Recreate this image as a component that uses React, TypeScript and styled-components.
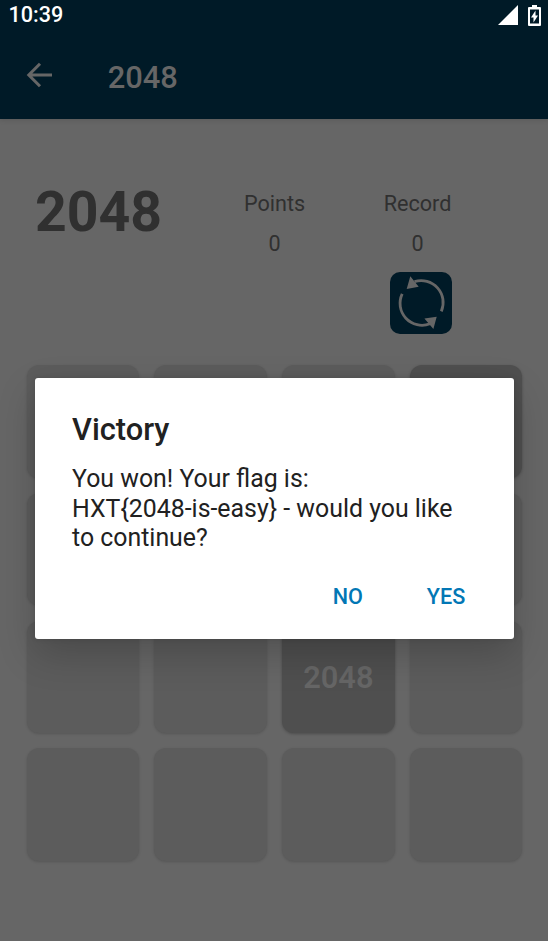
import React from "react";
import styled, { createGlobalStyle } from "styled-components";

const GlobalStyle = createGlobalStyle`
  *, *::before, *::after { box-sizing: border-box; }
  body { margin: 0; background: #666666; }
`;

const Screen = styled.div`
  position: relative;
  width: 548px;
  height: 941px;
  overflow: hidden;
  background: #666666;
  font-family: Roboto, sans-serif;
  color: #303030;
`;

const Header = styled.header`
  height: 119px;
  background: #001a27;
  box-shadow: 0 1px 5px rgba(0, 0, 0, 0.14);
`;

const StatusBar = styled.div`
  display: flex;
  align-items: center;
  justify-content: space-between;
  height: 34px;
  padding: 0 7px 5px 8.5px;
  color: #ffffff;
  font-size: 21.6px;
  font-weight: 500;
  line-height: 29px;
`;

const StatusIcons = styled.div`
  display: flex;
  align-items: center;
  gap: 10px;
  height: 27px;
`;

const Toolbar = styled.div`
  display: flex;
  align-items: center;
  height: 85px;
  padding-left: 26px;
`;

const BackIcon = styled.svg`
  display: block;
  margin: 0 55.7px 3px 0;
`;

const ToolbarTitle = styled.h1`
  margin: 2px 0 0;
  color: #666666;
  font-size: 30.9px;
  font-weight: 500;
  line-height: 36px;
`;

const Summary = styled.section`
  display: flex;
  height: 246px;
  padding: 62px 0 0 35px;
`;

const GameName = styled.div`
  width: 168px;
  font-size: 55.4px;
  font-weight: 700;
  line-height: 64px;
`;

const Score = styled.div`
  display: flex;
  flex-direction: column;
  align-items: center;
  width: 143px;
  padding-top: 10px;
  font-size: 21.6px;
  line-height: 25px;
`;

const ScoreValue = styled.div`
  margin-top: 15px;
`;

const RestartButton = styled.button`
  display: block;
  width: 62px;
  height: 62px;
  margin: 16px 0 0 7.6px;
  padding: 0;
  border: 0;
  border-radius: 10px;
  background: #001a27;
`;

const Board = styled.main`
  display: grid;
  grid-template-columns: repeat(4, 112.6px);
  grid-auto-rows: 112.6px;
  gap: 15.2px;
  padding-left: 26.5px;
`;

const Tile = styled.div<{ $filled: boolean }>`
  display: flex;
  align-items: center;
  justify-content: center;
  padding-top: 1px;
  border-radius: 12px;
  background: ${({ $filled }) => ($filled ? "#4f4f4f" : "#5c5c5c")};
  box-shadow: 0 1px 3px rgba(0, 0, 0, ${({ $filled }) => ($filled ? 0.26 : 0.16)});
  color: #666666;
  font-size: 30.8px;
  font-weight: 600;
`;

const Dialog = styled.div`
  position: absolute;
  top: 378px;
  left: 35px;
  width: 479px;
  height: 261px;
  padding: 33px 37px 0;
  border-radius: 3px;
  background: #ffffff;
  box-shadow: 0 15px 38px rgba(0, 0, 0, 0.2), 0 0 5px rgba(0, 0, 0, 0.12);
  color: #212121;
`;

const DialogTitle = styled.h2`
  margin: 0;
  font-size: 30.8px;
  font-weight: 500;
  line-height: 38px;
`;

const DialogMessage = styled.p`
  margin: 15px 0 0;
  font-size: 24.88px;
  line-height: 29.5px;
`;

const DialogActions = styled.div`
  display: flex;
  justify-content: flex-end;
  gap: 64px;
  margin: 31.4px 11.7px 0 0;
`;

const DialogButton = styled.button`
  padding: 0;
  border: 0;
  background: none;
  color: #0277b5;
  font-family: inherit;
  font-size: 21.6px;
  font-weight: 500;
  line-height: 25px;
`;

const tiles = [0, 0, 0, 2048, 0, 0, 0, 0, 0, 0, 2048, 0, 0, 0, 0, 0];

export default function App() {
  return (
    <Screen>
      <GlobalStyle />
      <Header>
        <StatusBar>
          <span>10:39</span>
          <StatusIcons>
            <svg width="20" height="20" viewBox="0 0 20 20">
              <path d="M20 0v20H0z" fill="#fff" />
            </svg>
            <svg width="13" height="22" viewBox="0 0 13 22">
              <path
                fillRule="evenodd"
                fill="#fff"
                d="M4 1h5v2h3q1 0 1 1v17q0 1-1 1H1q-1 0-1-1V4q0-1 1-1h3zM2 5.5v14h9v-14z"
              />
              <path d="M7.5 6.5v5H10L5.5 18.5v-5H3z" fill="#fff" />
            </svg>
          </StatusIcons>
        </StatusBar>
        <Toolbar>
          <BackIcon width="26" height="26" viewBox="0 0 26 26">
            <path d="M26 13H3M14 1.8 2.8 13 14 24.2" fill="none" stroke="#666" strokeWidth="3" />
          </BackIcon>
          <ToolbarTitle>2048</ToolbarTitle>
        </Toolbar>
      </Header>
      <Summary>
        <GameName>2048</GameName>
        <Score>
          <div>Points</div>
          <ScoreValue>0</ScoreValue>
        </Score>
        <Score>
          <div>Record</div>
          <ScoreValue>0</ScoreValue>
          <RestartButton aria-label="Restart">
            <svg width="62" height="62" viewBox="0 0 62 62">
              <g fill="none" stroke="#666" strokeWidth="2.8">
                <path d="M24.5 9.6A22 22 0 0 1 51.3 39.4" />
                <path d="M12.2 21.8A22 22 0 0 0 40 51.8" />
              </g>
              <path d="M20.3 4.3 28.7 14.7 16.7 17zM34.4 46.5 46.7 44.7 43.4 57z" fill="#666" />
            </svg>
          </RestartButton>
        </Score>
      </Summary>
      <Board>
        {tiles.map((value, index) => (
          <Tile key={index} $filled={value > 0}>
            {value > 0 && value}
          </Tile>
        ))}
      </Board>
      <Dialog role="dialog" aria-labelledby="dialog-title">
        <DialogTitle id="dialog-title">Victory</DialogTitle>
        <DialogMessage>
          You won! Your flag is:
          <br />
          HXT&#123;2048-is-easy&#125; - would you like
          <br />
          to continue?
        </DialogMessage>
        <DialogActions>
          <DialogButton>NO</DialogButton>
          <DialogButton>YES</DialogButton>
        </DialogActions>
      </Dialog>
    </Screen>
  );
}
